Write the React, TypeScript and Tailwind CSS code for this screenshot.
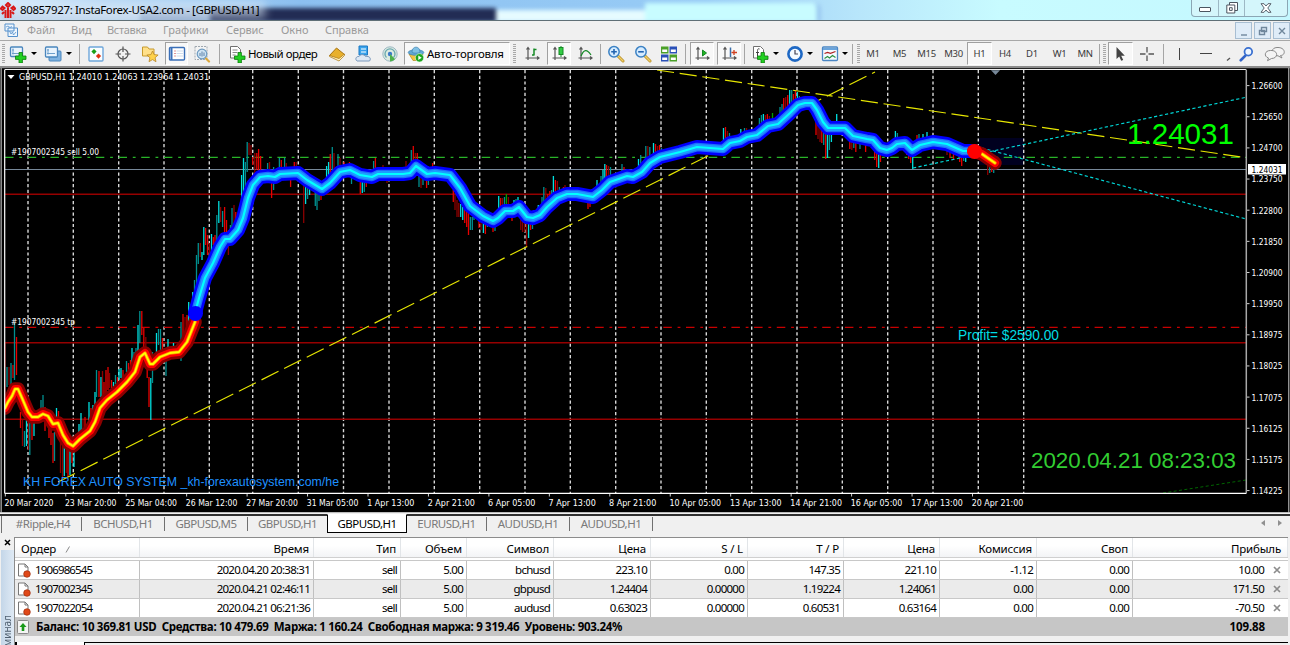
import { Fragment, type ReactNode } from "react"
import clsx from "clsx"

type Tone = "c" | "t" | "r" | "d" | "g"

const tones: Record<Tone, string> = {
  c: "#00e0e0",
  t: "#009090",
  r: "#e80000",
  d: "#8b0000",
  g: "#00a000",
}

// x, high, low, tone
const bars: [number, number, number, Tone][] = [
  [5, 343, 400, "d"], [7, 367, 387, "t"], [9, 367, 385, "d"], [11, 363, 386, "t"], [13, 365, 378, "r"],
  [14.5, 323, 380, "t"], [16.5, 337, 375, "r"], [20.5, 412, 428, "r"], [22.5, 420, 446, "d"], [24.5, 431, 447, "t"],
  [26.5, 420, 446, "c"], [28.5, 417, 450, "d"], [29.8, 417, 455, "t"], [32, 423, 440, "r"], [34, 423, 436, "c"],
  [41, 400, 413, "t"], [43, 395, 413, "t"], [45, 407, 431, "r"], [49, 427, 438, "r"], [51, 430, 445, "r"],
  [53, 433, 463, "r"], [54.5, 432, 461, "t"], [56.5, 408, 417, "c"], [58.5, 411, 420, "r"], [60.5, 433, 473, "d"],
  [62.5, 437, 480, "d"], [64.3, 443, 476, "c"], [66.3, 442, 473, "d"], [68, 443, 477, "r"], [70, 450, 475, "c"],
  [72, 450, 463, "r"], [74, 452, 467, "c"], [76, 434, 442, "c"], [79, 424, 435, "c"], [81, 413, 432, "c"],
  [83, 420, 430, "d"], [85, 417, 427, "r"], [89, 402, 423, "c"], [91, 408, 417, "r"], [93, 405, 415, "c"],
  [95, 392, 407, "c"], [96.5, 370, 397, "t"], [99, 371, 397, "r"], [101, 377, 397, "c"], [102.5, 371, 397, "d"],
  [104, 382, 397, "r"], [106, 370, 393, "r"], [108, 367, 390, "r"], [109.5, 373, 388, "d"], [111.5, 380, 388, "r"],
  [113.5, 382, 387, "c"], [115.5, 375, 384, "t"], [117.5, 377, 384, "r"], [119, 369, 380, "c"], [121, 368, 378, "c"],
  [123, 370, 377, "r"], [126.5, 361, 372, "t"], [128.5, 363, 372, "r"], [130.5, 360, 368, "r"], [132, 348, 367, "c"],
  [134, 352, 363, "t"], [136, 348, 358, "t"], [138, 325, 355, "c"], [139.8, 311, 343, "t"], [141.8, 311, 335, "r"],
  [143.8, 328, 348, "r"], [145.8, 337, 350, "d"], [147.2, 367, 378, "r"], [149, 377, 407, "r"], [150.8, 378, 420, "c"],
  [152.5, 352, 383, "t"], [156.5, 333, 352, "c"], [158.5, 329, 345, "t"], [160.5, 329, 350, "t"], [162.5, 338, 350, "r"],
  [166, 350, 376, "t"], [168, 339, 350, "c"], [173.5, 343, 350, "c"], [181, 322, 361, "t"], [183, 314, 343, "r"],
  [185, 317, 340, "d"], [187, 315, 337, "r"], [188.7, 302, 327, "c"], [190.7, 305, 320, "r"], [192.7, 292, 307, "c"],
  [194.5, 280, 307, "t"], [196.5, 255, 290, "t"], [198.3, 243, 264, "t"], [200.3, 243, 257, "d"], [202, 252, 260, "c"],
  [203.8, 227, 255, "c"], [205.6, 228, 245, "r"], [207.5, 235, 255, "r"], [209.5, 243, 257, "d"], [211.5, 234, 255, "c"],
  [213.3, 237, 245, "r"], [215, 235, 247, "r"], [216.8, 215, 243, "t"], [218.8, 201, 223, "c"], [220.6, 207, 222, "d"],
  [222.6, 211, 227, "t"], [224.6, 207, 235, "r"], [226.5, 220, 237, "r"], [228.4, 230, 255, "d"], [230.4, 225, 245, "t"],
  [232, 208, 230, "t"], [234, 205, 227, "d"], [235.8, 212, 230, "r"], [241.6, 175, 202, "c"], [243.5, 158, 198, "c"],
  [245.4, 162, 187, "t"], [247.2, 142, 172, "t"], [249, 143, 155, "d"], [251, 145, 155, "d"], [252.7, 157, 165, "r"],
  [254.8, 153, 173, "d"], [256.8, 153, 170, "r"], [258.6, 149, 177, "r"], [260.6, 156, 170, "r"], [267.6, 163, 183, "t"],
  [269.5, 162, 173, "d"], [271.6, 173, 198, "r"], [273.6, 167, 190, "t"], [279.4, 158, 170, "t"], [281.3, 160, 170, "r"],
  [284.6, 158, 168, "t"], [286.3, 163, 170, "d"], [290.6, 177, 187, "r"], [294.3, 162, 170, "r"], [296.3, 162, 170, "d"],
  [303.7, 183, 223, "d"], [305.6, 185, 204, "c"], [307.6, 185, 199, "t"], [309.6, 188, 195, "c"], [315.3, 190, 206, "t"],
  [317, 193, 210, "t"], [319, 188, 201, "t"], [321, 188, 200, "r"], [326.6, 166, 182, "c"], [328.6, 162, 178, "c"],
  [330.3, 154, 173, "r"], [332.3, 147, 172, "t"], [334, 153, 170, "d"], [338, 154, 170, "t"], [340, 158, 168, "d"],
  [344, 162, 168, "r"], [349.5, 162, 168, "r"], [351.5, 177, 184, "t"], [360.3, 180, 194, "r"], [362.3, 180, 193, "c"],
  [364.3, 180, 192, "t"], [366.3, 178, 187, "r"], [373.6, 161, 173, "t"], [375.4, 158, 172, "r"], [383, 165, 172, "d"],
  [387, 178, 183, "d"], [406, 161, 170, "d"], [411.3, 150, 167, "t"], [413.3, 146, 163, "r"], [415.3, 153, 163, "d"],
  [417.3, 153, 163, "r"], [419, 172, 187, "t"], [421, 175, 188, "d"], [423, 175, 185, "t"], [426.6, 175, 188, "r"],
  [428.4, 177, 185, "t"], [432.6, 163, 170, "r"], [453.3, 190, 202, "r"], [455, 193, 210, "d"], [457, 200, 217, "d"],
  [458.8, 203, 217, "d"], [460.7, 204, 217, "c"], [462.7, 207, 220, "c"], [464.7, 207, 223, "r"], [466.7, 210, 227, "r"],
  [468.5, 213, 235, "r"], [470.4, 217, 230, "t"], [472.3, 217, 230, "t"], [474, 217, 220, "t"], [479, 213, 228, "r"],
  [481, 218, 230, "d"], [483.4, 220, 233, "c"], [485.4, 220, 234, "r"], [487.4, 222, 227, "t"], [493, 225, 232, "r"],
  [495, 222, 231, "t"], [498.7, 196, 208, "c"], [500.7, 198, 208, "r"], [502.6, 198, 207, "d"], [504.5, 197, 205, "t"],
  [506.4, 194, 205, "g"], [508.4, 197, 205, "d"], [512, 213, 221, "r"], [514, 200, 207, "c"], [516, 199, 205, "t"],
  [518, 197, 203, "c"], [520.8, 217, 230, "d"], [522.6, 218, 232, "d"], [524.6, 220, 232, "d"], [526.6, 220, 247, "d"],
  [528.6, 222, 238, "c"], [530.6, 222, 230, "r"], [532.5, 222, 229, "t"], [538.3, 205, 212, "c"], [542, 197, 208, "t"],
  [543.8, 187, 202, "t"], [545.8, 188, 200, "d"], [547.8, 194, 200, "r"], [549.8, 191, 198, "r"], [551.6, 190, 198, "t"],
  [553.4, 176, 193, "c"], [555.4, 180, 193, "r"], [557.4, 181, 190, "d"], [559.4, 187, 193, "t"], [563.4, 187, 190, "r"],
  [565, 185, 190, "d"], [588, 198, 209, "r"], [590, 198, 207, "r"], [592, 198, 202, "t"], [597, 180, 190, "c"],
  [601, 176, 187, "t"], [603, 170, 183, "c"], [604.8, 164, 180, "c"], [606.5, 165, 178, "r"], [608.5, 166, 177, "d"],
  [610.5, 167, 175, "t"], [622, 164, 173, "t"], [624, 167, 172, "r"], [632, 178, 184, "r"], [638.5, 159, 168, "c"],
  [640.7, 155, 168, "t"], [645.8, 146, 162, "t"], [647.8, 146, 160, "d"], [649.8, 147, 158, "t"], [653.5, 143, 157, "c"],
  [655.5, 144, 155, "r"], [657.5, 146, 155, "d"], [659.5, 145, 154, "r"], [661.5, 148, 153, "t"], [723.5, 128, 142, "c"],
  [725.5, 127, 140, "r"], [727.5, 131, 138, "d"], [729.5, 133, 138, "t"], [740.8, 129, 136, "c"], [744.5, 128, 134, "t"],
  [746.5, 128, 134, "d"], [759.4, 118, 128, "t"], [761.4, 115, 127, "t"], [763.4, 114, 125, "c"], [765.4, 115, 124, "d"],
  [767.4, 114, 122, "r"], [769.4, 116, 121, "d"], [772.5, 113, 121, "g"], [780, 107, 117, "t"], [782, 104, 116, "t"],
  [783.7, 98, 112, "r"], [785.7, 97, 112, "d"], [787.7, 95, 110, "r"], [789.7, 90, 107, "c"], [791.7, 90, 103, "t"],
  [793.4, 94, 102, "r"], [795.4, 91, 100, "r"], [797.4, 92, 98, "c"], [799.4, 96, 99, "t"], [816, 120, 135, "r"],
  [818, 123, 139, "d"], [820, 127, 142, "d"], [821.8, 129, 143, "r"], [823.7, 128, 145, "t"], [825.7, 130, 159, "r"],
  [827.5, 133, 158, "c"], [829.4, 133, 150, "t"], [831.4, 133, 142, "c"], [836.7, 114, 125, "c"], [849.8, 135, 149, "r"],
  [851.8, 137, 150, "d"], [853.8, 139, 148, "t"], [855.8, 142, 152, "r"], [860, 142, 149, "t"], [865.6, 142, 152, "r"],
  [874.7, 147, 160, "r"], [876.7, 150, 167, "r"], [878.7, 150, 168, "c"], [880.5, 152, 162, "r"], [895.4, 131, 142, "c"],
  [897.4, 133, 140, "t"], [906.7, 150, 155, "r"], [908.7, 150, 159, "r"], [910.7, 153, 163, "r"], [912.7, 153, 169, "c"],
  [917, 135, 142, "r"], [919, 134, 141, "t"], [923, 134, 139, "c"], [927, 132, 138, "c"], [947, 148, 155, "d"],
  [950, 148, 158, "r"], [953.5, 150, 160, "r"], [959.7, 153, 162, "r"], [961.7, 155, 166, "r"], [963.7, 156, 161, "t"],
  [965.7, 156, 162, "c"], [987.7, 161, 175, "d"], [989.7, 163, 173, "t"], [991.7, 165, 172, "r"], [993.7, 165, 173, "t"],
]

const lowTrend =
  "5,408 8,402 12,396 15,389 18,389 22,398 28,412 32,417 38,417 43,414 48,416 53,424 58,423 63,435 68,443 73,446 80,439 90,431 95,422 100,408 107,400 117,392 127,382 135,372 140,357 145,353 150,364 153,364 160,357 170,353 179,352 187,342 195,322"

const upTrend =
  "195,313 199,298 205,278 213,263 220,247 225,239 230,239 238,230 243,218 248,198 253,185 260,177 268,176 275,177 280,174 298,173 307,180 322,189 330,183 340,172 350,170 360,175 372,177 378,174 403,174 410,173 416,166 427,174 435,173 450,175 460,188 470,206 483,216 493,221 498,218 505,211 513,211 519,207 527,217 533,218 540,215 547,207 557,198 567,194 577,194 593,197 602,190 610,182 627,176 633,177 642,172 650,163 660,157 680,152 697,147 723,149 730,143 740,141 747,137 757,135 768,126 778,124 790,113 798,105 805,103 812,103 817,110 823,122 828,128 845,128 853,136 867,139 873,140 880,148 887,150 892,148 897,144 905,143 912,150 920,145 933,142 947,144 963,151 974,151"

const lastTrend = "974,151 982,154 995,163"

const gridX = [
  28, 73.3, 118.7, 164, 209.3, 252.7, 298.3, 343.5, 389, 434.3, 479.7, 525, 570.3, 615.7, 661, 706.3, 751.7, 797,
  842.3, 887.7, 933, 978.3, 1023.7,
]

const prices = [
  "1.26600", "1.25650", "1.24700", "1.23750", "1.22800", "1.21850", "1.20900", "1.19950", "1.18975", "1.18025",
  "1.17075", "1.16125", "1.15175", "1.14225",
]

const dates = [
  "20 Mar 2020", "23 Mar 20:00", "25 Mar 04:00", "26 Mar 12:00", "27 Mar 20:00", "31 Mar 05:00", "1 Apr 13:00",
  "2 Apr 21:00", "6 Apr 05:00", "7 Apr 13:00", "8 Apr 21:00", "10 Apr 05:00", "13 Apr 13:00", "14 Apr 21:00",
  "16 Apr 05:00", "17 Apr 13:00", "20 Apr 21:00",
]

function Ribbon({ points, colors }: { points: string; colors: [string, number][] }) {
  return (
    <g clipPath="url(#plot)">
      {colors.map(([color, width]) => (
        <polyline
          key={color}
          points={points}
          fill="none"
          stroke={color}
          strokeWidth={width}
          strokeLinejoin="round"
          strokeLinecap="round"
        />
      ))}
    </g>
  )
}

const hot: [string, number][] = [["#8b0000", 13.5], ["#ff0000", 8], ["#ff8c00", 3.4], ["#ffff00", 1.8]]
const cold: [string, number][] = [["#0000ff", 14], ["#1e6cff", 8.6], ["#1e9cff", 6], ["#00ffff", 2.2]]

function Chart() {
  return (
    <svg width="1290" height="445" viewBox="0 68 1290 445" className="block shrink-0 bg-black">
      <clipPath id="plot">
        <rect x="5" y="70" width="1241" height="423" />
      </clipPath>
      <rect x="979" y="138" width="45" height="27" fill="#00001f" />
      {gridX.map((x) => (
        <line key={x} x1={x} x2={x} y1="70" y2="493" stroke="#d8d8d8" strokeWidth="1.4" strokeDasharray="3.2 2.5" />
      ))}
      {[194.3, 342.8, 419.2].map((y) => (
        <line key={y} x1="5" x2="1246" y1={y} y2={y} stroke="#960000" strokeWidth="1.4" />
      ))}
      <line x1="5" x2="1246" y1="169.5" y2="169.5" stroke="#778899" />
      <line x1="5" x2="1246" y1="157.4" y2="157.4" stroke="#28b428" strokeWidth="1.3" strokeDasharray="8.5 5.8 2.8 5.6" />
      <line x1="5" x2="1246" y1="327.4" y2="327.4" stroke="#c80000" strokeWidth="1.3" strokeDasharray="8.5 5.8 2.8 5.6" />

      {bars.map(([x, hi, lo, tone], i) => (
        <line key={i} x1={x} x2={x} y1={hi} y2={lo} stroke={tones[tone]} strokeWidth="1.3" />
      ))}

      <g stroke="#e6e600" strokeWidth="1.15">
        <line x1="58" y1="482" x2="875" y2="72" strokeDasharray="19 6.3" />
        <line x1="657" y1="70" x2="1241" y2="157" strokeDasharray="17.2 5.7" />
      </g>
      <g stroke="#00d8d8" strokeWidth="1.15" strokeDasharray="3.2 2.4">
        <line x1="913" y1="168" x2="1245" y2="97.5" />
        <line x1="982" y1="148" x2="1246" y2="219" />
      </g>
      <line x1="1163" y1="493" x2="1246" y2="480" stroke="#006400" strokeDasharray="3 2.4" />

      <Ribbon points={lowTrend} colors={hot} />
      <Ribbon points={upTrend} colors={cold} />
      <circle cx="195.5" cy="313.5" r="7.5" fill="#0000ff" />
      <Ribbon points={lastTrend} colors={hot} />
      <circle cx="974.5" cy="151.5" r="7.5" fill="#ff0000" />

      {/* frame and axes */}
      <path d="M0 68.5H1290" stroke="#202020" />
      <path d="M5 69.5H1246" stroke="#f0f0f0" />
      <path d="M4.7 69.5V493.4M4.7 493.4H1246.5" stroke="#fff" strokeWidth="1.2" fill="none" />
      <path d="M1246.3 69.5V493" stroke="#a8a8a8" strokeWidth="1.5" />
      <path d="M1.2 68V513" stroke="#8a8a8a" strokeWidth="1.6" />
      <path d="M0 512.6H1290M1288.8 68V513" stroke="#d0d0d0" strokeWidth="1" />
      <path d="M991 70.2H1000L995.5 75Z" fill="#778899" />
      <path d="M7.5 75H14.5L11 79Z" fill="#fff" />

      <g fill="#fff" fontFamily="DejaVu Sans Condensed, Noto Sans, sans-serif" fontSize="9">
        {prices.map((p, i) => (
          <Fragment key={p}>
            <path d={`M1247 ${85.6 + i * 31.15}H1249.5`} stroke="#d0d0d0" />
            <text x="1251.5" y={89 + i * 31.15} textLength="31" lengthAdjust="spacingAndGlyphs">{p}</text>
          </Fragment>
        ))}
        {dates.map((d, i) => (
          <Fragment key={d}>
            <path d={`M${5.3 + i * 60.45} 494V496.5`} stroke="#d0d0d0" />
            <text x={4.5 + i * 60.45} y="505.5" textLength={i === 0 ? 49 : d.length * 4.3} lengthAdjust="spacingAndGlyphs">{d}</text>
          </Fragment>
        ))}
        <text x="19" y="80" textLength="190" lengthAdjust="spacingAndGlyphs">GBPUSD,H1  1.24010 1.24063 1.23964 1.24031</text>
        <text x="11" y="154.5" textLength="88" lengthAdjust="spacingAndGlyphs">#1907002345 sell 5.00</text>
        <text x="11" y="324.5" textLength="64" lengthAdjust="spacingAndGlyphs">#1907002345 tp</text>
      </g>
      <rect x="1248" y="164" width="38" height="10.5" fill="#fff" />
      <text x="1251.5" y="173" fill="#000" fontFamily="DejaVu Sans Condensed, sans-serif" fontSize="9" textLength="31" lengthAdjust="spacingAndGlyphs">1.24031</text>

      <g fontFamily="Liberation Sans, Arial, sans-serif">
        <text x="1127" y="144" fill="#00ff00" fontSize="30" textLength="107" lengthAdjust="spacingAndGlyphs">1.24031</text>
        <text x="1031" y="468" fill="#32cd32" fontSize="22.5" textLength="205" lengthAdjust="spacingAndGlyphs">2020.04.21 08:23:03</text>
        <text x="958" y="340" fill="#00dce4" fontSize="14" textLength="101" lengthAdjust="spacingAndGlyphs">Profit= $2590.00</text>
        <text x="23" y="485.5" fill="#1e90ff" fontSize="13" textLength="316" lengthAdjust="spacingAndGlyphs">KH FOREX AUTO SYSTEM _kh-forexautosystem.com/he</text>
      </g>
    </svg>
  )
}

function Icon({ children, size = 18 }: { children: ReactNode; size?: number }) {
  return (
    <svg width={size} height={size} viewBox="0 0 18 18" fill="none" className="shrink-0">
      {children}
    </svg>
  )
}

const Plus = () => <path d="M10 7.5h3.4V11H17v3.4h-3.6V18H10v-3.6H6.5V11H10z" fill="#22d022" stroke="#0a7a0a" strokeWidth=".8" />

const AxisArrows = () => <path d="M5 2.5V15M2.5 13H16M3.5 4.5 5 2.5 6.5 4.5M14 11.5 16 13 14 14.5" stroke="#555" strokeWidth="1.2" />

function Lens({ sign }: { sign: string }) {
  return (
    <Icon>
      <path d="M10.5 10.5 16 16" stroke="#b8902c" strokeWidth="3" strokeLinecap="round" />
      <path d="M10.5 10.5 16 16" stroke="#f2cf62" strokeWidth="1.4" strokeLinecap="round" />
      <circle cx="7" cy="6.8" r="5.2" fill="#d6ecff" stroke="#3c82c4" strokeWidth="1.5" />
      <path d={sign} stroke="#2264b0" strokeWidth="1.6" />
    </Icon>
  )
}

function Slot({ className, children, pressed }: { className: string; children?: ReactNode; pressed?: boolean }) {
  return (
    <div
      className={clsx(
        "flex h-[23px] shrink-0 items-center justify-center",
        pressed && "border border-t-[#a0a0a0] border-r-white border-b-white border-l-[#a0a0a0] bg-[#f8f8f8]",
        className,
      )}
    >
      {children}
    </div>
  )
}

function Arrow({ className }: { className: string }) {
  return (
    <Slot className={className}>
      <div className="border-x-[3px] border-t-[3px] border-x-transparent border-t-black" />
    </Slot>
  )
}

function Sep({ className }: { className: string }) {
  return (
    <Slot className={className}>
      <div className="h-[20px] w-px bg-[#a5a5a5]" />
    </Slot>
  )
}

function Grip({ className }: { className: string }) {
  return (
    <Slot className={className}>
      <div className="h-[19px] w-[3px] bg-[repeating-linear-gradient(#a8a8a8_0_1px,#f0f0f0_1px_2px)]" />
    </Slot>
  )
}

function Toolbar() {
  return (
    <div className="flex h-[26px] w-[1290px] shrink-0 items-center border-t border-[#a8a8a8] bg-[#f0f0f0]">
      <Grip className="w-[6px]" />
      <Slot className="w-[23px]">
        <Icon>
          <rect x="1.5" y="2" width="12" height="9.5" rx="1" fill="#eaf4fd" stroke="#4a86bd" strokeWidth="1.3" />
          <path d="M4 3.5v6M3 8.5h8M3 5h2" stroke="#6fa0cc" />
          <Plus />
        </Icon>
      </Slot>
      <Arrow className="w-[9px]" />
      <Slot className="ml-[3px] w-[24px]">
        <Icon>
          <rect x="5" y="6" width="12" height="10" rx="1" fill="#7fb2e0" stroke="#4a86bd" />
          <rect x="1.5" y="2" width="12" height="10" rx="1" fill="#eaf4fd" stroke="#4a86bd" strokeWidth="1.3" />
          <path d="M4 4v5.5M3 8.5h8M3 5h2" stroke="#6fa0cc" />
        </Icon>
      </Slot>
      <Arrow className="w-[8px]" />
      <Sep className="w-[13px]" />
      <Slot className="w-[20px]">
        <Icon>
          <rect x="2" y="2" width="14" height="14" rx="1" fill="#fafdff" stroke="#6ea6da" strokeWidth="1.4" />
          <path d="m7 4 2.6 2.6L7 9.2 4.4 6.6z" fill="#18a018" />
          <path d="m11.5 8.5 2.6 2.6-2.6 2.6-2.6-2.6z" fill="#e03010" />
        </Icon>
      </Slot>
      <Slot className="w-[34px]">
        <Icon>
          <circle cx="9" cy="9" r="5" stroke="#555" strokeWidth="1.2" />
          <path d="M9 1.5V7M9 11v5.5M1.5 9H7M11 9h5.5" stroke="#555" strokeWidth="1.2" />
        </Icon>
      </Slot>
      <Slot className="w-[19px]">
        <Icon>
          <path d="M1.5 2h5L8 4h5v7H1.5z" fill="#ffe08a" stroke="#c79a2e" />
          <path d="m11.5 6 1.6 3.6 4 .4-3 2.7.9 4-3.5-2.1L8 16.7l.9-4-3-2.7 4-.4z" fill="#ffd24a" stroke="#b8862a" strokeWidth=".8" />
        </Icon>
      </Slot>
      <Slot pressed className="ml-[6px] w-[23px]">
        <Icon>
          <rect x="1.5" y="2.5" width="15" height="12.5" rx="1" fill="#fff" stroke="#3a6fb8" strokeWidth="1.4" />
          <path d="M3.5 3v12" stroke="#3a6fb8" strokeWidth="2" />
          <path d="M6.5 6h1M6.5 8.5h1M6.5 11h1" stroke="#c03030" />
          <path d="M8.5 6H15M8.5 8.5H15M8.5 11H15" stroke="#c4d4e8" strokeWidth=".8" />
        </Icon>
      </Slot>
      <Slot className="w-[28px]">
        <Icon>
          <rect x="2" y="1.5" width="12" height="13" fill="#f4f4f4" stroke="#a0a8b0" strokeDasharray="2 1" />
          <path d="M12 12.5 16 16.5" stroke="#dca83c" strokeWidth="2.2" strokeLinecap="round" />
          <circle cx="9" cy="9" r="4.8" fill="#cfe4f4" stroke="#6d9ac0" strokeWidth="1.2" />
          <path d="M7 11V8M9 11.5v-5M11 11V7.5" stroke="#5e82a8" />
        </Icon>
      </Slot>
      <Sep className="w-[7px]" />
      <Slot className="ml-[3px] w-[22px]">
        <Icon>
          <path d="M2.5 1.5h7l3 3V13h-10z" fill="#fff" stroke="#707070" />
          <path d="M4.5 5h5M4.5 7.5h5M4.5 10h3" stroke="#8a8a8a" />
          <Plus />
        </Icon>
      </Slot>
      <Slot className="w-[75px] justify-start text-[11.5px] tracking-[-0.5px] whitespace-nowrap">Новый ордер</Slot>
      <Slot className="w-[28px]">
        <Icon>
          <path d="m8.500 3 8 6.500L11 15l-9.500-4.500z" fill="#e8b02c" stroke="#a87412" />
          <path d="m1.500 10.500 9.500 3L16.500 9v1.500L11 16l-9.500-4.500z" fill="#fff0b8" stroke="#a87412" strokeWidth=".7" />
        </Icon>
      </Slot>
      <Slot className="w-[24px]">
        <Icon>
          <path d="M5 1h8.500v9H5z" fill="#3aa4ec" stroke="#1b78c4" />
          <path d="M7 4h5M7 7h5" stroke="#fff" strokeWidth="1.2" />
          <path d="M3 16c-2.5-2-.5-5 2-4.500 1.500-2.500 5-2.500 6.500 0 4-.8 6 2 4 4.500z" fill="#dde8f4" stroke="#7a98bc" />
        </Icon>
      </Slot>
      <Slot className="w-[29px]">
        <Icon>
          <circle cx="9" cy="9" r="7.2" fill="#dcebe0" stroke="#9cb8c4" />
          <path d="M5.5 12.5a5 5 0 1 1 7 0" stroke="#6aa8b0" strokeWidth="1.3" />
          <circle cx="9" cy="9" r="2.2" fill="#3a78c8" />
          <path d="M9 9v7.5c2 0 4-1 5-2.500z" fill="#4cb04c" />
        </Icon>
      </Slot>
      <Slot pressed className="w-[106px] justify-start gap-[2px] pl-[2px] text-[11.5px] tracking-[-0.25px] whitespace-nowrap">
        <Icon>
          <path d="M2 9h14l-3 6.500H6z" fill="#f2c440" stroke="#b48820" strokeWidth=".7" />
          <ellipse cx="9" cy="7.500" rx="7.800" ry="2.800" fill="#5fa8d4" stroke="#3a80b0" strokeWidth=".7" />
          <path d="M5 7c0-6.500 8-6.500 8 0 0 1.500-8 1.500-8 0z" fill="#7fc0e4" stroke="#3a80b0" strokeWidth=".7" />
          <circle cx="12.5" cy="12.8" r="4.2" fill="#1ea51e" stroke="#e8ffe8" strokeWidth=".6" />
          <path d="m11.300 10.600 3.400 2.200-3.400 2.200z" fill="#fff" />
        </Icon>
        <span>Авто-торговля</span>
      </Slot>
      <Grip className="w-[9px]" />
      <Slot className="w-[25px]">
        <Icon>
          <AxisArrows />
          <path d="M11 3.5v7M9 10h2M11 4.5h2.5" stroke="#158a25" strokeWidth="1.5" />
        </Icon>
      </Slot>
      <Slot pressed className="ml-[3px] w-[24px]">
        <Icon>
          <AxisArrows />
          <path d="M11 1v11" stroke="#158a25" />
          <rect x="9" y="2.5" width="4" height="7" fill="#33cc44" stroke="#158a25" />
        </Icon>
      </Slot>
      <Slot className="w-[28px]">
        <Icon>
          <AxisArrows />
          <path d="M5 11c3-7 6-7 10-1" stroke="#158a25" strokeWidth="1.2" />
        </Icon>
      </Slot>
      <Sep className="w-[3px]" />
      <Slot className="w-[28px]"><Lens sign="M4.2 6.8h5.6M7 4v5.6" /></Slot>
      <Slot className="w-[26px]"><Lens sign="M4.2 6.8h5.6" /></Slot>
      <Slot className="w-[26px]">
        <Icon>
          <rect x="1" y="1.5" width="7.5" height="7" fill="#4aa028" />
          <rect x="9.5" y="1.5" width="7.5" height="7" fill="#2a50b8" />
          <rect x="1" y="9.5" width="7.5" height="7" fill="#2a50b8" />
          <rect x="9.5" y="9.5" width="7.5" height="7" fill="#4aa028" />
          <path d="M2.2 4.500h5V7h-5zM10.800 4.500h5V7h-5zM2.200 12.500h5V15h-5zM10.800 12.500h5V15h-5z" fill="#fff" />
        </Icon>
      </Slot>
      <Sep className="w-[7px]" />
      <Slot pressed className="ml-px w-[24px]">
        <Icon>
          <AxisArrows />
          <path d="m9.500 5 4 3-4 3z" fill="#22b422" stroke="#158a25" />
        </Icon>
      </Slot>
      <Slot pressed className="ml-[3px] w-[24px]">
        <Icon>
          <AxisArrows />
          <path d="M10.500 2.500V12" stroke="#3a6ea8" strokeWidth="1.5" />
          <path d="M11.500 7.500H17M14 5v5" stroke="#d04020" strokeWidth="1.3" />
        </Icon>
      </Slot>
      <Sep className="w-[7px]" />
      <Slot className="w-[24px]">
        <Icon>
          <path d="M2.5 1.5h7l3 3V13h-10z" fill="#fff" stroke="#707070" />
          <path d="M8.5 4c-2-1-2 1-2 3v4M5 7.5h3" stroke="#444" />
          <Plus />
        </Icon>
      </Slot>
      <Arrow className="w-[7px]" />
      <Slot className="w-[32px]">
        <Icon>
          <circle cx="9" cy="9" r="6.6" fill="#f4faff" stroke="#1e68c4" strokeWidth="2.6" />
          <path d="M9 5v4h3" stroke="#445" strokeWidth="1.2" />
        </Icon>
      </Slot>
      <Arrow className="-ml-[6px] w-[9px]" />
      <Slot className="ml-[5px] w-[22px]">
        <Icon>
          <rect x="1.5" y="2" width="15" height="13.5" rx="1" fill="#f4faff" stroke="#4a86c4" strokeWidth="1.3" />
          <path d="M2 4h14" stroke="#6aa4dc" strokeWidth="2" />
          <path d="m3.500 8.500 3-1 3 .8 5-1.800" stroke="#b02020" strokeWidth="1.2" />
          <path d="m3.500 13.500 3-2 2 1.500 3-2.500 3 2" stroke="#2a9040" strokeWidth="1.2" />
        </Icon>
      </Slot>
      <Arrow className="w-[7px]" />
      <Sep className="w-[8px]" />
      <Grip className="w-[4px]" />
      <div className="flex text-[9.5px] tracking-[-0.3px] text-[#3a3a3a]">
        <Slot className="w-[26px] pt-[2px]">M1</Slot>
        <Slot className="w-[27px] pt-[2px]">M5</Slot>
        <Slot className="w-[27px] pt-[2px]">M15</Slot>
        <Slot className="w-[27px] pt-[2px]">M30</Slot>
        <Slot pressed className="w-[25px] pt-[2px]">H1</Slot>
        <Slot className="w-[26px] pt-[2px]">H4</Slot>
        <Slot className="w-[28px] pt-[2px]">D1</Slot>
        <Slot className="w-[27px] pt-[2px]">W1</Slot>
        <Slot className="w-[24px] pt-[2px]">MN</Slot>
      </div>
      <Sep className="w-[4px]" />
      <Grip className="w-[6px]" />
      <Slot pressed className="ml-px w-[25px]">
        <Icon>
          <path d="M4.5 2v12l2.700-2.500 2 4.300 2-.9-2-4.200h3.600z" fill="#444" />
        </Icon>
      </Slot>
      <Slot className="w-[28px]">
        <Icon>
          <path d="M9 2v5.5M9 10.5V16M2 9h5.5M10.5 9H16" stroke="#555" strokeWidth="1.3" />
        </Icon>
      </Slot>
      <Sep className="w-[4px]" />
      <Slot className="w-[28px]"><div className="h-[12px] w-px bg-[#444]" /></Slot>
      <Slot className="w-[26px]"><div className="h-px w-[12px] bg-[#444]" /></Slot>
      <Slot className="w-[18px]">
        <Icon><path d="m8 15.500 3-2.500" stroke="#555" strokeWidth="1.3" /></Icon>
      </Slot>
      <Slot className="w-[20px]">
        <Icon size={16}>
          <path d="M2 16 7.5 10.5" stroke="#3264c8" strokeWidth="3" strokeLinecap="round" />
          <circle cx="10.5" cy="6.5" r="4.3" fill="#eef6ff" stroke="#3a70d0" strokeWidth="2" />
        </Icon>
      </Slot>
      <Slot className="ml-[6px] w-[22px]">
        <svg width="21" height="16" viewBox="0 0 21 16" fill="#f4f4f4" stroke="#888">
          <path d="M13 1.500c9-.5 9 8 3.500 8l1.500 2.500-4-2.200c-7 0-8-8-1-8.300z" />
          <path d="M6.500 4.500c8-.5 8 8 1 8l-4 2.200 1-2.700c-5-1.500-4-7.500 2-7.500z" />
        </svg>
      </Slot>
    </div>
  )
}

function TitleBar() {
  return (
    <div className="relative h-[20px] shrink-0 overflow-hidden bg-[linear-gradient(90deg,#d4e9fa_0,#b4d6f4_100px,#8cc0f0_300px,#98ccf6_700px,#b8e6fb_860px,#c8fbff_1000px,#c4f8ff_1290px)]">
      <div className="absolute inset-0 flex pt-[8px] blur-[2px]">
        <div className="h-[14px] w-[140px] bg-[#bcd3ea]" />
        <div className="h-[14px] w-[70px] bg-[#8ca4c8]" />
        <div className="h-[14px] w-[286px] bg-[#222c54]" />
        <div className="mt-[2px] h-[12px] w-[149px] bg-[#e6fbff]" />
        <div className="-mt-[5px] h-[19px] w-[175px] rounded-tr-md border-r-3 border-[#8cb8ea] bg-[#c8fcff]" />
      </div>
      <div className="absolute top-[1px] left-[10px] h-[17px] w-[255px] bg-[#dcebf8]/60 blur-[5px]" />
      <div className="relative flex h-full items-start justify-between">
        <div className="flex h-[20px] items-center gap-[4px]">
          <svg width="16" height="17" viewBox="0 0 16 17" fill="none" stroke="#d81818" strokeWidth="2">
            <path d="M8 6v10M5.500 8v8M10.500 8v8M8 1l2 2-2 2-2-2zM2.500 4.500 4.500 6l-2 2L.8 6.500zM13.500 4.500l-2 1.500 2 2 1.700-1.500zM4 10l-2 2M12 10l2 2" />
          </svg>
          <span className="text-[11.5px] leading-[20px] tracking-[-0.37px] whitespace-nowrap text-black">
            80857927: InstaForex-USA2.com - [GBPUSD,H1]
          </span>
        </div>
        <div className="mr-[2px] flex h-[17px] w-[97px] rounded-b border border-t-0 border-[#8ba6b4] bg-[#d4f6fb]">
          <div className="flex w-[27px] items-center justify-center border-r border-[#9db8c4]">
            <div className="mt-[3px] h-[5px] w-[12px] rounded-[1px] border border-[#4c5560] bg-white" />
          </div>
          <div className="flex w-[26px] items-center justify-center border-r border-[#9db8c4]">
            <svg width="12" height="12" viewBox="0 0 12 12" fill="#fff" stroke="#4c5560">
              <path d="M3.500.5h8v8h-8z" />
              <path d="M.8 3h8v8h-8zM3.500 5.700h2.700v2.700H3.500z" />
            </svg>
          </div>
          <div className="flex flex-1 items-center justify-center">
            <svg width="12" height="10" viewBox="0 0 12 10" fill="#fff" stroke="#4c5560" strokeWidth=".9">
              <path d="M1 .7h3L6 3 8 .7h3L7.800 5 11 9.300H8L6 7 4 9.300H1L4.200 5z" />
            </svg>
          </div>
        </div>
      </div>
    </div>
  )
}

function MenuBar() {
  return (
    <div className="flex h-[20px] shrink-0 items-center border-t border-[#5f6f76] bg-[#f0f0f0] pl-[4px] text-[11px] whitespace-nowrap text-[#9a9a9a]">
      <svg width="14" height="15" viewBox="0 0 14 15" fill="#eef6fd" stroke="#5590cc">
        <path d="M1 1h9v7H1zM4 5h9.500v8.500H4z" />
        <path d="m2 4 2-1 2 1.500 2-1M5.500 8l1.500 3 1.500-2 1 3L12 9" fill="none" strokeWidth=".8" />
      </svg>
      <span className="ml-[9px] w-[44px] tracking-[-0.1px]">Файл</span>
      <span className="w-[36px]">Вид</span>
      <span className="w-[56px] tracking-[-0.3px]">Вставка</span>
      <span className="w-[63px]">Графики</span>
      <span className="w-[55px] tracking-[-0.1px]">Сервис</span>
      <span className="w-[44px]">Окно</span>
      <span className="tracking-[-0.1px]">Справка</span>
      <div className="ml-auto flex gap-[2px]">
        {["M3 10h6", "M4.5 2.5h5v4h-5zM2.5 5.5h5v4h-5z", "m3 3 6 6M9 3l-6 6"].map((d) => (
          <div key={d} className="flex h-[17px] w-[17px] items-center justify-center border border-[#a8bed2] bg-[#dfecf8]">
            <svg width="12" height="12" viewBox="0 0 12 12" fill="none" stroke="#70879c" strokeWidth="1.4">
              <path d={d} />
            </svg>
          </div>
        ))}
      </div>
    </div>
  )
}

const tabs = ["#Ripple,H4", "BCHUSD,H1", "GBPUSD,M5", "GBPUSD,H1", "GBPUSD,H1", "EURUSD,H1", "AUDUSD,H1", "AUDUSD,H1"]
const tabWidths = ["w-[80px] pl-[3px]", "w-[83px]", "w-[83px]", "w-[79px]", "w-[80px]", "w-[80px]", "w-[83px]", "w-[83px]"]
const ACTIVE = 4

function ChartTabs() {
  return (
    <div className="flex h-[20px] shrink-0 items-start border-t-2 border-[#303030] bg-[#f0f0f0] pl-px text-[11.5px] tracking-[-0.5px] whitespace-nowrap text-[#7a7a7a]">
      <div className="h-[17px] w-px bg-[#707070]" />
      {tabs.map((tab, i) =>
        i === ACTIVE ? (
          <div key={i} className={clsx("-mt-[2px] flex h-[19px] items-center justify-center border border-black border-t-white bg-white text-black", tabWidths[i])}>
            {tab}
          </div>
        ) : (
          <div key={i} className={clsx("flex h-[16px] items-center justify-center", tabWidths[i])}>
            <span className="flex-1 text-center">{tab}</span>
            {i !== 3 && <span className="h-[14px] w-px bg-[#707070]" />}
          </div>
        ),
      )}
      <div className="mt-[4px] mr-[8px] ml-auto flex gap-[13px]">
        <div className="border-y-[3px] border-r-[4px] border-y-transparent border-r-[#909090]" />
        <div className="border-y-[3px] border-l-[4px] border-y-transparent border-l-[#909090]" />
      </div>
    </div>
  )
}

const columns = ["Ордер", "Время", "Тип", "Объем", "Символ", "Цена", "S / L", "T / P", "Цена", "Комиссия", "Своп", "Прибыль"]

const orders = [
  ["1906986545", "2020.04.20 20:38:31", "sell", "5.00", "bchusd", "223.10", "0.00", "147.35", "221.10", "-1.12", "0.00", "10.00"],
  ["1907002345", "2020.04.21 02:46:11", "sell", "5.00", "gbpusd", "1.24404", "0.00000", "1.19224", "1.24061", "0.00", "0.00", "171.50"],
  ["1907022054", "2020.04.21 06:21:36", "sell", "5.00", "audusd", "0.63023", "0.00000", "0.60531", "0.63164", "0.00", "0.00", "-70.50"],
]

const cols = "grid grid-cols-[125px_174px_87px_66px_87px_97px_97px_96px_96px_97px_96px_155px]"

function Terminal() {
  return (
    <div className="flex h-[109px] shrink-0 bg-[#f0f0f0]">
      <div className="flex w-[14px] shrink-0 flex-col items-center pt-[2px]">
        <svg width="7" height="7" viewBox="0 0 7 7" stroke="#000" strokeWidth="1.5" className="shrink-0">
          <path d="m1 1 5 5M6 1 1 6" />
        </svg>
        <div className="mt-[4px] flex w-[13px] flex-1 items-end justify-center bg-[linear-gradient(90deg,#c4d6e8,#dfeaf5)]">
          <span className="rotate-180 text-[10px] leading-[13px] whitespace-nowrap text-[#506070] [writing-mode:vertical-rl]">минал</span>
        </div>
      </div>
      <div className="flex w-[1274px] shrink-0 flex-col border-t border-l border-[#8c8c8c] bg-white">
        <div className={clsx(cols, "h-[20px] shrink-0 border-b border-[#d0d0d0] bg-[linear-gradient(#fff_40%,#f3f4f6)] text-[11.5px] leading-[22px] tracking-[-0.15px]")}>
          {columns.map((c, i) => (
            <div key={i} className={clsx("h-[19px] border-r border-[#e2e5e8]", i === 0 && "flex pl-[6px]", i > 0 && i < 11 && "pr-[4px] text-right", i === 11 && "pr-[6px] text-right")}>
              {c}
              {i === 0 && (
                <svg width="6" height="7" viewBox="0 0 6 7" stroke="#888" className="mt-[8px] ml-[9px]">
                  <path d="M1 6.5 4.5.5" />
                </svg>
              )}
            </div>
          ))}
        </div>
        <div className="mt-[2px] border-t border-[#c8c8c8] text-[11.5px] tracking-[-0.74px]">
          {orders.map((row, r) => (
            <div key={row[0]} className={clsx(cols, "h-[19px] border-b border-[#c8c8c8] leading-[18px]", r === 1 && "bg-[#ebebeb]")}>
              {row.map((cell, i) => (
                <div key={i} className={clsx("flex items-center", i < 11 && "border-r border-[#c0c0c0]", i ? "justify-end pr-[3px]" : "pl-[2px]", i === 0 && "tracking-[-0.85px]")}>
                  {i === 0 && (
                    <svg width="15" height="15" viewBox="0 0 15 15" fill="none" className="mr-[3px]">
                      <path d="M1.5 1H8l3 3v9H1.5z" fill="#fff" stroke="#777" />
                      <path d="M8 1v3h3" stroke="#777" />
                      <circle cx="10" cy="11" r="3.3" fill="#e04818" stroke="#9c2c0c" strokeWidth=".7" />
                    </svg>
                  )}
                  {cell}
                  {i === 11 && (
                    <svg width="8" height="8" viewBox="0 0 8 8" stroke="#8c8c8c" strokeWidth="1.7" className="mr-[4px] ml-[9px]">
                      <path d="m1 1 6 6M7 1 1 7" />
                    </svg>
                  )}
                </div>
              ))}
            </div>
          ))}
        </div>
        <div className="flex h-[18px] shrink-0 items-center bg-[#c6c6c6] pr-[23px] pl-[2px] text-[11.5px] font-bold tracking-[-0.31px] whitespace-pre">
          <svg width="12" height="14" viewBox="0 0 12 14" className="mr-[7px]">
            <rect x=".5" y=".5" width="11" height="13" rx="1" fill="#f4f4f4" stroke="#888" />
            <path d="m6 3 3.500 4H7.300v4H4.700V7H2.500z" fill="#1a9a1a" />
          </svg>
          <span>Баланс: 10 369.81 USD  Средства: 10 479.69  Маржа: 1 160.24  Свободная маржа: 9 319.46  Уровень: 903.24%</span>
          <span className="ml-auto tracking-[-0.1px]">109.88</span>
        </div>
        <div className="flex flex-1 items-end bg-[#f0f0f0]">
          <div className="h-[4px] w-[2px] bg-black" />
          <div className="h-[4px] w-[67px] bg-white" />
          <div className="h-[4px] flex-1 border-t border-l border-black" />
        </div>
      </div>
    </div>
  )
}

export default function App() {
  return (
    <div className="flex h-[645px] w-[1290px] flex-col overflow-hidden bg-[#f0f0f0] font-['Noto_Sans',sans-serif] text-black">
      <TitleBar />
      <MenuBar />
      <Toolbar />
      <div className="h-[2px] shrink-0 bg-[#8c8c8c]" />
      <Chart />
      <div className="h-px shrink-0 bg-[#f0f0f0]" />
      <ChartTabs />
      <div className="h-[3px] shrink-0" />
      <Terminal />
    </div>
  )
}
